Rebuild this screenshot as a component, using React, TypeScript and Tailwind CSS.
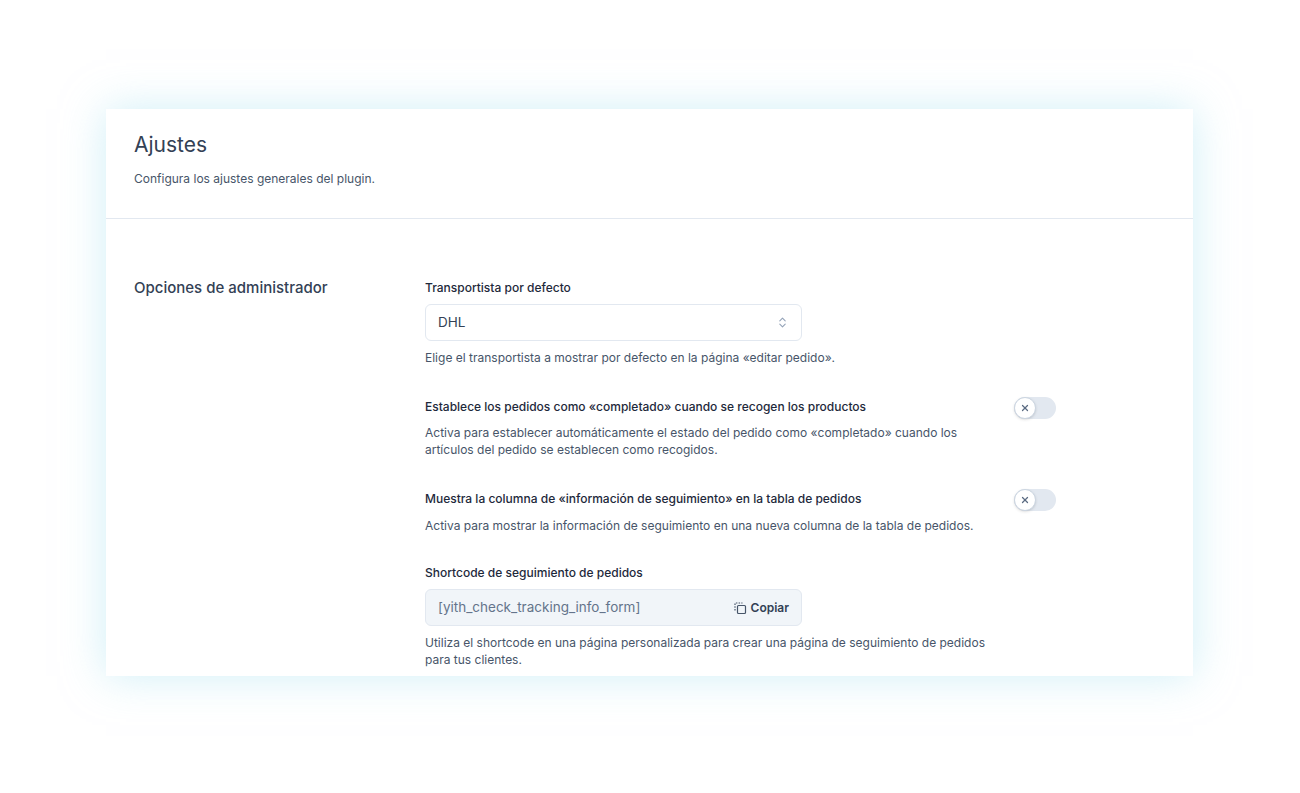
import { ChevronsUpDown, X } from 'lucide-react';

const Toggle = () => (
  <div className="w-[42px] h-[22px] rounded-full bg-[#e2e8f0] flex items-center shrink-0">
    <div className="w-[22px] h-[22px] rounded-full bg-white border border-[#cbd5e1] shadow-sm flex items-center justify-center">
      <X size={10} strokeWidth={3} className="text-[#5b6b82]" />
    </div>
  </div>
);

const CopyIcon = () => (
  <svg width="14" height="14" viewBox="0 0 14 14" fill="none" stroke="#475569" strokeWidth="1.2">
    <rect x="4.5" y="4.5" width="8" height="8" rx="1" />
    <path d="M2 9.5V2.5a0.5 0.5 0 0 1 .5-.5h7" strokeDasharray="1.5 1.2" />
  </svg>
);

export default function App() {
  return (
    <div className="w-[1300px] h-[793px] bg-white pt-[109px] pl-[106px]" style={{ fontFamily: 'Inter, "Noto Sans", sans-serif' }}>
      <div className="w-[1087px] h-[567px] overflow-hidden bg-white shadow-[0_0_40px_rgba(170,225,240,0.55)]">
        <div className="px-7 pt-[22px] h-[110px] border-b border-[#e2e8f0]">
          <h1 className="text-[21px] text-[#334155] leading-7">Ajustes</h1>
          <p className="mt-[11px] text-[12px] text-[#475569]">Configura los ajustes generales del plugin.</p>
        </div>
        <div className="flex px-7 pt-[59px]">
          <div className="w-[291px] text-[15px] font-medium text-[#334155] leading-5">Opciones de administrador</div>
          <div className="flex flex-col text-[12px] text-[#475569]">
            <div className="font-medium text-[#1e293b] leading-5">Transportista por defecto</div>
            <div className="mt-[6px] w-[377px] h-[37px] border border-[#e2e8f0] rounded-md flex items-center justify-between px-3 text-[13.5px] text-[#334155]">
              DHL
              <ChevronsUpDown size={13} className="text-[#94a3b8]" />
            </div>
            <p className="mt-[7px] leading-5">Elige el transportista a mostrar por defecto en la página «editar pedido».</p>

            <div className="mt-[29px] flex w-[631px] justify-between">
              <div className="w-[560px]">
                <div className="font-medium text-[#1e293b] leading-5">Establece los pedidos como «completado» cuando se recogen los productos</div>
                <p className="mt-[7px] leading-[17px]">Activa para establecer automáticamente el estado del pedido como «completado» cuando los artículos del pedido se establecen como recogidos.</p>
              </div>
              <div className="pt-[-1px]"><Toggle /></div>
            </div>

            <div className="mt-[31px] flex w-[631px] justify-between">
              <div className="w-[560px]">
                <div className="font-medium text-[#1e293b] leading-5">Muestra la columna de «información de seguimiento» en la tabla de pedidos</div>
                <p className="mt-[7px] leading-5">Activa para mostrar la información de seguimiento en una nueva columna de la tabla de pedidos.</p>
              </div>
              <div><Toggle /></div>
            </div>

            <div className="mt-[27px] font-medium text-[#1e293b] leading-5">Shortcode de seguimiento de pedidos</div>
            <div className="mt-[6px] w-[377px] h-[37px] bg-[#f1f5f9] border border-[#e2e8f0] rounded-md flex items-center justify-between pl-3 pr-3 text-[13.5px] text-[#64748b]">
              [yith_check_tracking_info_form]
              <span className="flex items-center gap-1 text-[12px] font-semibold text-[#334155]"><CopyIcon />Copiar</span>
            </div>
            <p className="mt-[8px] w-[570px] leading-[17px]">Utiliza el shortcode en una página personalizada para crear una página de seguimiento de pedidos para tus clientes.</p>
          </div>
        </div>
      </div>
    </div>
  );
}
